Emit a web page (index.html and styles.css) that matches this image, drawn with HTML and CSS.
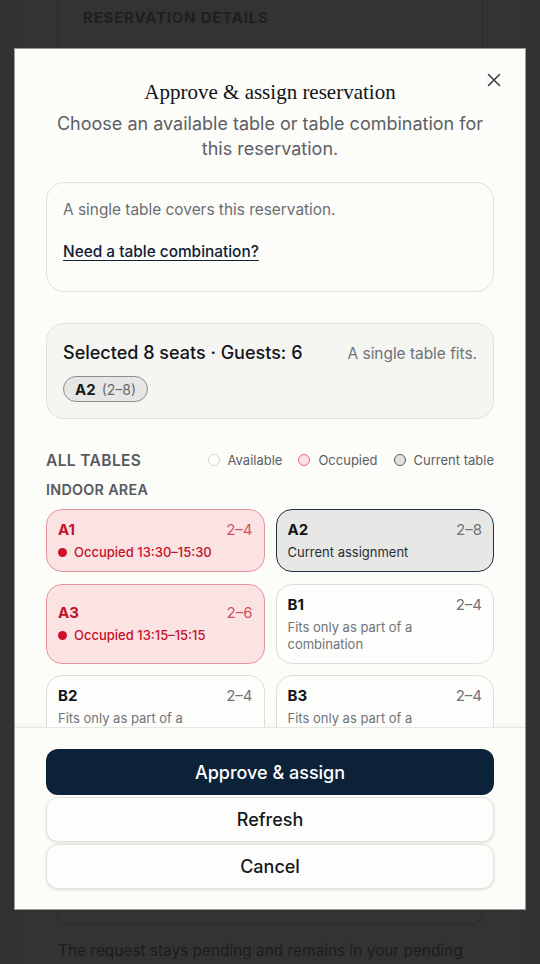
FILE: index.html
```html
<!DOCTYPE html>
<html lang="en">
<head>
<meta charset="utf-8">
<title>Approve &amp; assign reservation</title>
<link rel="stylesheet" href="styles.css">
</head>
<body>
<div class="page">
  <div class="panel">
    <div class="bg-card">
      <div class="bg-title">RESERVATION DETAILS</div>
    </div>
    <p class="bg-text">The request stays pending and remains in your pending</p>
  </div>
</div>

<div class="modal" role="dialog" aria-labelledby="mtitle">
  <div class="modal-body">
    <button class="close" aria-label="Close">
      <svg width="14" height="14" viewBox="0 0 14 14"><path d="M1.5 1.5 L12.5 12.5 M12.5 1.5 L1.5 12.5" stroke="#3a3f47" stroke-width="1.6" stroke-linecap="round" fill="none"/></svg>
    </button>
    <h2 class="title" id="mtitle">Approve &amp; assign reservation</h2>
    <p class="subtitle">Choose an available table or table combination for this reservation.</p>

    <div class="info-box">
      <p class="info-text">A single table covers this reservation.</p>
      <a class="info-link" href="#">Need a table combination?</a>
    </div>

    <div class="selected-box">
      <div class="selected-head">
        <span class="selected-title">Selected 8 seats · Guests: 6</span>
        <span class="selected-note">A single table fits.</span>
      </div>
      <span class="chip"><b>A2</b><span class="chip-range">(2–8)</span></span>
    </div>

    <div class="legend-row">
      <span class="section-label">ALL TABLES</span>
      <div class="legend">
        <span class="legend-item"><i class="dot dot-available"></i>Available</span>
        <span class="legend-item"><i class="dot dot-occupied"></i>Occupied</span>
        <span class="legend-item"><i class="dot dot-current"></i>Current table</span>
      </div>
    </div>
    <div class="area-label">INDOOR AREA</div>

    <div class="grid">
      <div class="tcard occupied">
        <div class="tcard-head"><span class="tname">A1</span><span class="trange">2–4</span></div>
        <div class="tstatus"><i class="rdot"></i>Occupied 13:30–15:30</div>
      </div>
      <div class="tcard current">
        <div class="tcard-head"><span class="tname">A2</span><span class="trange">2–8</span></div>
        <div class="tdesc dark">Current assignment</div>
      </div>
      <div class="tcard occupied">
        <div class="tcard-head"><span class="tname">A3</span><span class="trange">2–6</span></div>
        <div class="tstatus"><i class="rdot"></i>Occupied 13:15–15:15</div>
      </div>
      <div class="tcard">
        <div class="tcard-head"><span class="tname">B1</span><span class="trange">2–4</span></div>
        <div class="tdesc">Fits only as part of a combination</div>
      </div>
      <div class="tcard">
        <div class="tcard-head"><span class="tname">B2</span><span class="trange">2–4</span></div>
        <div class="tdesc">Fits only as part of a combination</div>
      </div>
      <div class="tcard">
        <div class="tcard-head"><span class="tname">B3</span><span class="trange">2–4</span></div>
        <div class="tdesc">Fits only as part of a combination</div>
      </div>
    </div>
  </div>
  <div class="modal-footer">
    <button class="btn primary">Approve &amp; assign</button>
    <button class="btn secondary">Refresh</button>
    <button class="btn secondary">Cancel</button>
  </div>
</div>
</body>
</html>
```

FILE: styles.css
```css
* { box-sizing: border-box; }
html, body { margin: 0; padding: 0; }
body {
  background: #323232;
  font-family: Inter, "Noto Sans", sans-serif;
  width: 540px;
  height: 964px;
  overflow: hidden;
}
.page {
  padding: 0 22px;
  height: 964px;
}
.panel {
  height: 964px;
  border-left: 1px solid #363636;
  border-right: 1px solid #363636;
  background: #333333;
  padding: 0 34px;
}
.bg-card {
  height: 925px;
  border: 1px solid #2b2b2b;
  border-top: none;
  border-radius: 0 0 12px 12px;
  padding: 8px 25px;
}
.bg-title {
  font-size: 15px;
  font-weight: 700;
  letter-spacing: 0.8px;
  color: #1f1f1f;
  line-height: 20px;
}
.bg-text {
  margin: 15px 0 0 1px;
  font-size: 15.4px;
  line-height: 22px;
  color: #1c1c1c;
}

.modal {
  position: fixed;
  top: 48px;
  left: 14px;
  width: 512px;
  height: 862px;
  background: #fcfcf9;
  border: 1px solid #9a9a9a;
  display: flex;
  flex-direction: column;
}
.modal-body {
  position: relative;
  flex: 1;
  overflow: hidden;
  padding: 28px 31px 0;
}
.close {
  position: absolute;
  top: 23px;
  right: 23px;
  width: 16px;
  height: 16px;
  padding: 0;
  border: none;
  background: none;
  display: flex;
  align-items: center;
  justify-content: center;
}
.title {
  margin: 0;
  text-align: center;
  font-family: "Liberation Serif", "DejaVu Serif", serif;
  font-weight: 400;
  font-size: 21px;
  line-height: 30px;
  color: #111317;
}
.subtitle {
  margin: 4px 0 0;
  text-align: center;
  font-size: 18px;
  line-height: 25px;
  color: #5c5f65;
}
.info-box {
  margin-top: 21px;
  border: 1px solid #dededb;
  border-radius: 18px;
  padding: 16px 16px 28px;
  display: flex;
  flex-direction: column;
  align-items: flex-start;
  gap: 20px;
}
.info-text {
  margin: 0;
  font-size: 15.4px;
  line-height: 22px;
  color: #6b6e73;
}
.info-link {
  font-size: 15.4px;
  line-height: 22px;
  font-weight: 500;
  color: #0e2036;
  text-decoration: underline;
  text-underline-offset: 3px;
  text-decoration-thickness: 1px;
}
.selected-box {
  margin-top: 31px;
  background: #f5f5f2;
  border: 1px solid #e0e0dd;
  border-radius: 18px;
  padding: 17px 16px 16px;
  display: flex;
  flex-direction: column;
  align-items: flex-start;
  gap: 11px;
}
.selected-head {
  align-self: stretch;
  display: flex;
  justify-content: space-between;
  align-items: baseline;
}
.selected-title {
  font-size: 18px;
  line-height: 24px;
  font-weight: 500;
  color: #111418;
}
.selected-note {
  font-size: 15.4px;
  color: #6f7277;
}
.chip {
  display: inline-flex;
  align-items: center;
  gap: 6px;
  height: 26px;
  padding: 0 11px;
  border: 1px solid #8e8e8e;
  border-radius: 13px;
  background: #e6e6e4;
  font-size: 15px;
  color: #15181c;
}
.chip b { font-weight: 700; }
.chip-range { font-size: 14px; color: #66696e; }

.legend-row {
  margin-top: 30px;
  display: flex;
  justify-content: space-between;
  align-items: center;
  height: 22px;
}
.section-label {
  font-size: 15.5px;
  font-weight: 600;
  color: #56595e;
  letter-spacing: 0.4px;
}
.legend {
  display: flex;
  gap: 16px;
  font-size: 13px;
  color: #5c5f64;
}
.legend-item {
  display: inline-flex;
  align-items: center;
  gap: 8px;
}
.dot {
  width: 12px;
  height: 12px;
  border-radius: 50%;
  display: inline-block;
}
.dot-available { background: #fdfdfb; border: 1px solid #d6d6d3; }
.dot-occupied { background: #fbe1e3; border: 1px solid #e06f7b; }
.dot-current { background: #e2e2e1; border: 1px solid #55585d; }
.area-label {
  margin-top: 9px;
  font-size: 14.3px;
  line-height: 20px;
  font-weight: 600;
  color: #56595e;
  letter-spacing: 0.3px;
}

.grid {
  margin-top: 9px;
  display: grid;
  grid-template-columns: 1fr 1fr;
  column-gap: 11px;
  row-gap: 11.5px;
}
.tcard {
  min-height: 63px;
  border: 1px solid #dcdcd9;
  border-radius: 16px;
  background: #fdfdfb;
  padding: 10px 10px 10px 11px;
  display: flex;
  flex-direction: column;
  justify-content: center;
  gap: 4px;
}
.tcard-head {
  display: flex;
  justify-content: space-between;
  align-items: center;
  line-height: 20px;
}
.tname {
  font-size: 15px;
  font-weight: 700;
  color: #111418;
}
.trange {
  font-size: 15px;
  color: #6f7277;
  padding-right: 1px;
}
.tdesc {
  font-size: 13px;
  line-height: 17px;
  color: #707378;
  padding-right: 60px;
}
.tdesc.dark { color: #2a2d33; }
.tcard.occupied {
  background: #fbe3e4;
  border-color: #e6959c;
}
.occupied .tname { color: #c41228; }
.occupied .trange { color: #d2525f; }
.tstatus {
  display: flex;
  align-items: center;
  gap: 7px;
  font-size: 13px;
  line-height: 17px;
  font-weight: 500;
  color: #c41228;
}
.rdot {
  width: 9px;
  height: 9px;
  border-radius: 50%;
  background: #d0102a;
  display: inline-block;
}
.tcard.current {
  background: #e7e7e6;
  border: 1.5px solid #1e3045;
}

.modal-footer {
  flex: none;
  border-top: 1px solid #e6e6e3;
  box-shadow: 0 -2px 6px rgba(0,0,0,0.03);
  background: #fcfcf9;
  padding: 21px 31px 20px;
  display: flex;
  flex-direction: column;
  gap: 2px;
}
.btn {
  font-family: Inter, "Noto Sans", sans-serif;
  font-size: 18px;
  font-weight: 500;
  height: 45px;
  border-radius: 12px;
  cursor: pointer;
}
.btn.primary {
  height: 46px;
  background: #0b2239;
  color: #ffffff;
  border: none;
}
.btn.secondary {
  background: #fdfdfb;
  color: #15181c;
  border: 1px solid #e2e2df;
  box-shadow: 0 1px 3px rgba(0,0,0,0.12);
}
```
